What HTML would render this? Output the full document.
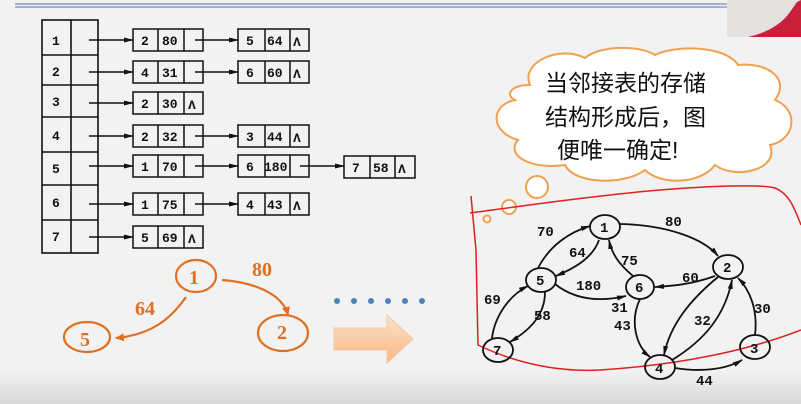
<!DOCTYPE html>
<html><head><meta charset="utf-8"><style>
html,body{margin:0;padding:0}
body{width:801px;height:404px;overflow:hidden;background:linear-gradient(#f2f2f2 0,#f2f2f2 370px,#d8d8d8 404px);position:relative;font-family:"Liberation Serif",serif}
</style></head><body>
<svg width="801" height="404" style="position:absolute;left:0;top:0" font-family="Liberation Mono, monospace" font-weight="bold">
<defs>
<marker id="a" markerWidth="10" markerHeight="6" refX="9" refY="3" orient="auto" markerUnits="userSpaceOnUse"><path d="M0,0.5 L10,3 L0,5.5Z" fill="#111"/></marker>
<marker id="o" markerWidth="10" markerHeight="8" refX="8" refY="4" orient="auto" markerUnits="userSpaceOnUse"><path d="M0,0 L9,4 L0,8Z" fill="#e07020"/></marker>
<linearGradient id="ag" x1="0" y1="0" x2="0" y2="1"><stop offset="0" stop-color="#fde3cc"/><stop offset="1" stop-color="#f7b683"/></linearGradient>
</defs>
<line x1="15" y1="4" x2="740" y2="4" stroke="#6e8fbf" stroke-width="1.2"/>
<line x1="15" y1="7" x2="740" y2="7" stroke="#6e8fbf" stroke-width="1.2"/>
<rect x="727" y="0" width="74" height="37" fill="#e4e2e0"/>
<path d="M748,37 C765,33 780,26 790,12 L797,2 L801,0 L801,37Z" fill="#c8203a"/>
<g stroke="#111" stroke-width="1.6" fill="none">
<rect x="42" y="20" width="56" height="233"/><line x1="71" y1="20" x2="71" y2="253"/>
<line x1="42" y1="55" x2="98" y2="55"/><line x1="42" y1="85" x2="98" y2="85"/><line x1="42" y1="117" x2="98" y2="117"/><line x1="42" y1="152" x2="98" y2="152"/><line x1="42" y1="185" x2="98" y2="185"/><line x1="42" y1="220" x2="98" y2="220"/>
</g>
<g font-size="13" fill="#111">
<text x="52" y="45">1</text><text x="52" y="76">2</text><text x="52" y="106">3</text><text x="52" y="140">4</text><text x="52" y="173">5</text><text x="52" y="207">6</text><text x="52" y="241">7</text>
</g>
<g stroke="#111" stroke-width="1.5" fill="none">
<line x1="89" y1="40" x2="133" y2="40" marker-end="url(#a)"/><line x1="195" y1="40" x2="238" y2="40" marker-end="url(#a)"/>
<line x1="89" y1="72" x2="133" y2="72" marker-end="url(#a)"/><line x1="195" y1="72" x2="238" y2="72" marker-end="url(#a)"/>
<line x1="89" y1="103" x2="133" y2="103" marker-end="url(#a)"/>
<line x1="89" y1="136" x2="133" y2="136" marker-end="url(#a)"/><line x1="195" y1="136" x2="238" y2="136" marker-end="url(#a)"/>
<line x1="89" y1="166" x2="133" y2="166" marker-end="url(#a)"/><line x1="195" y1="166" x2="238" y2="166" marker-end="url(#a)"/><line x1="300" y1="166" x2="344" y2="166" marker-end="url(#a)"/>
<line x1="89" y1="204" x2="133" y2="204" marker-end="url(#a)"/><line x1="195" y1="204" x2="238" y2="204" marker-end="url(#a)"/>
<line x1="89" y1="237" x2="133" y2="237" marker-end="url(#a)"/>
</g>
<g stroke="#111" stroke-width="1.5" fill="none">
<path d="M133,29h70v22h-70z M158,29v22 M184,29v22 M238,29h71v22h-71z M265,29v22 M290,29v22"/>
<path d="M133,61h70v22h-70z M158,61v22 M184,61v22 M238,61h71v22h-71z M265,61v22 M290,61v22"/>
<path d="M133,92h70v22h-70z M158,92v22 M184,92v22"/>
<path d="M133,125h70v22h-70z M158,125v22 M184,125v22 M238,125h71v22h-71z M265,125v22 M290,125v22"/>
<path d="M133,155h70v22h-70z M158,155v22 M184,155v22 M238,155h71v22h-71z M265,155v22 M290,155v22 M344,156h71v22h-71z M370,156v22 M395,156v22"/>
<path d="M133,193h70v22h-70z M158,193v22 M184,193v22 M238,193h71v22h-71z M265,193v22 M290,193v22"/>
<path d="M133,226h70v22h-70z M158,226v22 M184,226v22"/>
</g>
<g font-size="13" fill="#111">
<text x="141" y="45">2</text><text x="162" y="45">80</text><text x="246" y="45">5</text><text x="267" y="45">64</text><text x="293" y="46">Λ</text>
<text x="141" y="77">4</text><text x="162" y="77">31</text><text x="246" y="77">6</text><text x="267" y="77">60</text><text x="293" y="78">Λ</text>
<text x="141" y="108">2</text><text x="162" y="108">30</text><text x="188" y="109">Λ</text>
<text x="141" y="141">2</text><text x="162" y="141">32</text><text x="246" y="141">3</text><text x="267" y="141">44</text><text x="293" y="142">Λ</text>
<text x="141" y="171">1</text><text x="162" y="171">70</text><text x="246" y="171">6</text><text x="264" y="171">180</text><text x="352" y="172">7</text><text x="373" y="172">58</text><text x="398" y="173">Λ</text>
<text x="141" y="209">1</text><text x="162" y="209">75</text><text x="246" y="209">4</text><text x="267" y="209">43</text><text x="293" y="210">Λ</text>
<text x="141" y="242">5</text><text x="162" y="242">69</text><text x="188" y="243">Λ</text>
</g>
<g stroke="#e07020" stroke-width="2.2" fill="none">
<ellipse cx="196" cy="276" rx="20" ry="16"/><ellipse cx="87" cy="337" rx="23" ry="15"/><ellipse cx="283" cy="333" rx="25" ry="18"/>
<path d="M186,297 C170,320 150,335 116,338" marker-end="url(#o)"/>
<path d="M222,280 C250,282 282,292 288,315" marker-end="url(#o)"/>
</g>
<g fill="#e07020" font-family="Liberation Serif,serif" font-weight="bold" font-size="20">
<text x="189" y="284">1</text><text x="80" y="346">5</text><text x="277" y="339">2</text>
<text x="252" y="276">80</text><text x="135" y="315">64</text>
</g>
<g fill="#4f81bd"><circle cx="337" cy="301" r="3"/><circle cx="354" cy="301" r="3"/><circle cx="371" cy="301" r="3"/><circle cx="388" cy="301" r="3"/><circle cx="405" cy="301" r="3"/><circle cx="422" cy="301" r="3"/></g>
<path d="M334,328 H387 V315 L413,339 L387,363 V350 H334Z" fill="url(#ag)" stroke="#f3c9a5" stroke-width="1"/>
<path d="M530,85 C520,62 560,45 585,58 C600,45 640,45 655,55 C675,45 725,45 738,65 C770,62 790,80 775,100 C800,110 795,140 770,145 C780,170 735,180 715,165 C700,185 660,185 645,170 C625,185 575,185 565,165 C530,170 505,155 518,140 C490,132 490,105 515,100 C505,95 510,85 530,85Z" fill="#fff" stroke="#f0a050" stroke-width="2"/>
<g fill="#fff" stroke="#f0a050" stroke-width="2"><circle cx="537" cy="187" r="11"/><circle cx="509" cy="207" r="7"/><circle cx="487" cy="219" r="3.5"/></g>
<g font-family="Liberation Sans, Noto Sans CJK SC, sans-serif" font-weight="normal" font-size="23" fill="#111">
<text x="545" y="91">当邻接表的存储</text><text x="545" y="125">结构形成后，图</text><text x="557" y="158">便唯一确定!</text>
</g>
<path d="M470,213 C530,205 600,195 660,190 C710,186 760,184 775,188 C790,194 795,210 801,225" stroke="#e02020" stroke-width="1.5" fill="none"/>
<path d="M471,196 L476,250 L478,345 C520,365 560,372 600,370 C680,365 750,350 801,330" stroke="#e02020" stroke-width="1.5" fill="none"/>
<g stroke="#111" stroke-width="1.8" fill="none">
<ellipse cx="605" cy="227" rx="15" ry="12"/><ellipse cx="728" cy="267" rx="15" ry="12"/><ellipse cx="541" cy="280" rx="15" ry="12"/><ellipse cx="640" cy="287" rx="14" ry="12"/><ellipse cx="498" cy="350" rx="15" ry="12"/><ellipse cx="660" cy="367" rx="15" ry="12"/><ellipse cx="755" cy="347" rx="15" ry="12"/>
<path d="M538,268 C550,245 570,232 590,226" marker-end="url(#a)"/>
<path d="M620,224 C670,225 705,240 718,256" marker-end="url(#a)"/>
<path d="M599,240 C592,260 570,270 556,276" marker-end="url(#a)"/>
<path d="M633,276 C620,265 612,255 609,240" marker-end="url(#a)"/>
<path d="M715,276 C690,285 670,286 655,287" marker-end="url(#a)"/>
<path d="M555,284 C575,300 600,302 626,296" marker-end="url(#a)"/>
<path d="M492,338 C495,315 510,295 528,286" marker-end="url(#a)"/>
<path d="M545,292 C545,315 530,330 510,342" marker-end="url(#a)"/>
<path d="M718,277 C690,300 670,325 664,355" marker-end="url(#a)"/>
<path d="M672,360 C705,340 725,315 732,280" marker-end="url(#a)"/>
<path d="M640,299 C630,320 635,345 650,357" marker-end="url(#a)"/>
<path d="M755,335 C758,310 750,290 738,278" marker-end="url(#a)"/>
<path d="M675,368 C700,372 725,370 742,360" marker-end="url(#a)"/>
</g>
<g font-size="14" fill="#111" font-weight="bold" font-family="Liberation Mono, monospace">
<text x="600" y="232">1</text><text x="723" y="272">2</text><text x="536" y="285">5</text><text x="635" y="292">6</text><text x="493" y="355">7</text><text x="655" y="373">4</text><text x="750" y="353">3</text>
<text x="537" y="236">70</text><text x="665" y="226">80</text><text x="569" y="257">64</text><text x="621" y="265">75</text><text x="682" y="282">60</text><text x="576" y="290">180</text><text x="484" y="304">69</text><text x="534" y="320">58</text><text x="611" y="312">31</text><text x="694" y="325">32</text><text x="614" y="330">43</text><text x="754" y="313">30</text><text x="696" y="385">44</text>
</g>
</svg>
</body></html>
